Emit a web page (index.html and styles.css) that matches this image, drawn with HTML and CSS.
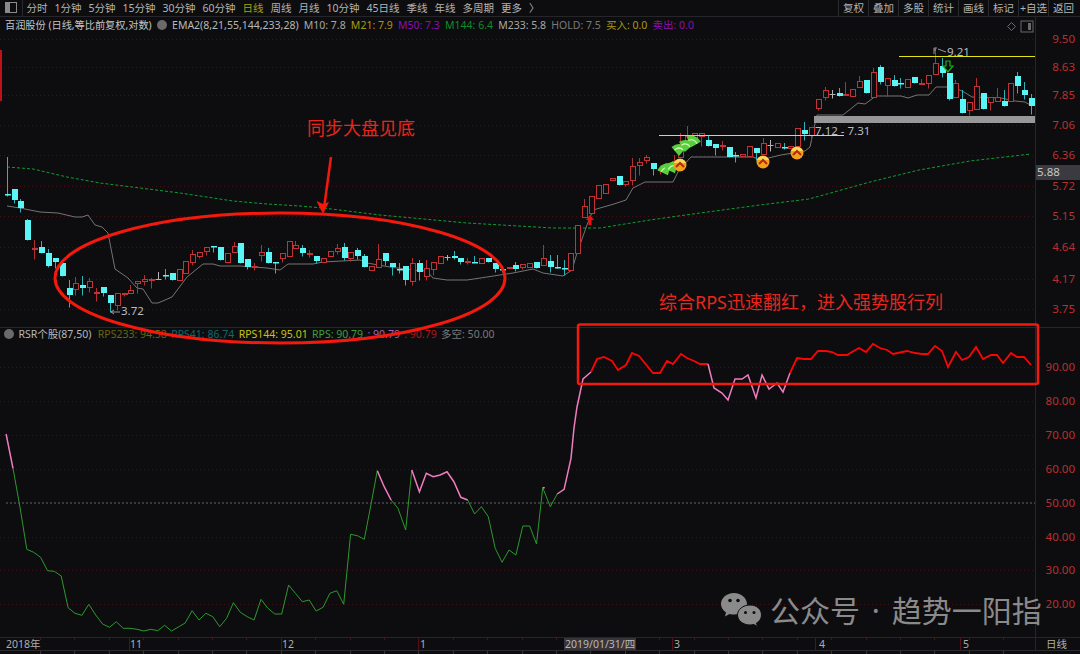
FILE: index.html
```html
<!DOCTYPE html>
<html lang="zh">
<head>
<meta charset="utf-8">
<title>百润股份 日线</title>
<link rel="stylesheet" href="styles.css">
</head>
<body>
<div class="page">
  <header class="toolbar">
    <div class="panel-btn"><span class="panel-glyph"></span></div>
    <nav class="periods">
      <span>分时</span><span>1分钟</span><span>5分钟</span><span>15分钟</span><span>30分钟</span><span>60分钟</span>
      <span class="active">日线</span><span>周线</span><span>月线</span><span>10分钟</span><span>45日线</span><span>季线</span><span>年线</span><span>多周期</span><span>更多</span><span>〉</span>
    </nav>
    <nav class="tools">
      <span>复权</span><span>叠加</span><span>多股</span><span>统计</span><span>画线</span><span>标记</span><span>+自选</span><span>返回</span>
    </nav>
  </header>

  <main class="stage">
    <svg class="layer" viewBox="0 17 1080 637" width="1080" height="637">
      <g id="grid"></g>
      <rect class="edge-mark" x="0" y="50" width="2" height="51"/>
      <polyline class="ema-green" points="7,167 33,169 67,177 100,183 140,188 180,193 233,201 267,204 300,206 323,208 380,215 467,223 553,228 600,228 650,220 700,213 760,205 809,199 870,182 919,170 970,161 1031,154"/>
      <polyline class="hold" points="7,206 20,208 40,212 58,213 75,217 82,217 88,215 95,225 102,227 108,233 115,269 128,278 137,288 143,289 152,303 158,303 172,297 187,277 203,264 213,264 220,266 240,266 267,268 280,270 288,264 313,264 323,262 360,260 367,263 390,267 413,270 427,271 433,278 447,280 467,280 487,277 513,273 533,269 543,273 563,276 572,270 577,253 587,225 593,210 600,208 614,204 626,200 633,188 645,182 673,182 679,170 691,157 753,157 760,160 781,155 805,151 810,147 814,128 817,115 843,115 858,103 865,104 876,96 901,96 908,98 917,95 929,95 936,87 953,87 964,92 972,97 1001,98 1015,101 1025,102 1032,106"/>
      <g id="candles"></g>

      <rect class="band" x="814" y="116" width="221" height="7"/>
      <line class="yellow" x1="659" y1="135.500" x2="844" y2="135.500"/>
      <line class="yellow" x1="899" y1="56.500" x2="1035" y2="56.500"/>
      <text class="note" x="815" y="135">7.12 - 7.31</text>
      <text class="note" x="947" y="56">9.21</text>
      <text class="note" x="121" y="315">3.72</text>
      <path class="pointer" d="M120 312H111M111 312l3 -2M111 312l3 2"/>
      <path class="pointer" d="M946 52L938 49M934 54V48h3M934 50h2"/>

      <g id="fans"></g>
      <g id="balls"></g>
      <path class="arrow-down" d="M946 61h4v5h3l-5 6-5-6h3z"/>
      <path class="arrow-up" d="M590 215l4 5h-2.500v5h-3v-5H586z"/>

      <g id="rsr"></g>
      <line class="dash50" x1="6" y1="503" x2="1035" y2="503"/>

      <line class="axis" x1="1035.500" y1="17" x2="1035.500" y2="650"/>
      <line class="axis" x1="0" y1="327.500" x2="1080" y2="327.500"/>
      <line class="axis" x1="0" y1="637.500" x2="1080" y2="637.500"/>
      <line class="foot" x1="0" y1="650.500" x2="1080" y2="650.500"/>
      <g id="ticks"></g>

      <g class="price">
        <text x="1075" y="43">9.50</text><text x="1075" y="71">8.63</text><text x="1075" y="99">7.85</text>
        <text x="1075" y="129">7.06</text><text x="1075" y="159">6.36</text><text x="1075" y="190">5.72</text>
        <text x="1075" y="220">5.15</text><text x="1075" y="251">4.64</text><text x="1075" y="283">4.17</text>
        <text x="1075" y="313">3.75</text>
        <text x="1075" y="371">90.00</text><text x="1075" y="405">80.00</text><text x="1075" y="439">70.00</text>
        <text x="1075" y="473">60.00</text><text x="1075" y="507">50.00</text><text x="1075" y="541">40.00</text>
        <text x="1075" y="574">30.00</text><text x="1075" y="608">20.00</text>
      </g>
      <rect class="now-box" x="1036" y="165" width="44" height="15"/>
      <text class="now" x="1037" y="176">5.88</text>
      <path class="diamond" d="M1011.500 22.500l4 4-4 4-4-4z"/>
      <rect class="square" x="1021" y="21" width="12" height="11"/>
      <rect class="square-fill" x="1028" y="23" width="3" height="7"/>

      <g class="dates">
        <text x="6" y="648">2018年</text><text x="130" y="648">11</text><text x="282" y="648">12</text>
        <text x="420" y="648">1</text><text x="674" y="648">3</text><text x="819" y="648">4</text><text x="963" y="648">5</text>
        <text x="1046" y="648">日线</text>
      </g>
      <rect class="date-box" x="564" y="638" width="72" height="12"/>
      <text class="date-now" x="565" y="648">2019/01/31/四</text>

      <g class="wechat">
        <path class="wechat-big" d="M734 593c-7.500 0-13 5-13 11 0 3.500 2 6.500 5 8.500l-1 4 4.500-2.500c1.500.4 3 .6 4.500.6 7.500 0 13-5 13-10.600S741.500 593 734 593z"/>
        <path class="wechat-small" d="M750 605c-7 0-12.500 4.500-12.500 10s5.500 10 12.500 10c1.300 0 2.600-.2 3.800-.5l3.700 2-1-3.400c3-1.800 5-4.700 5-8.100 0-5.500-4.500-10-11.500-10z"/>
        <circle class="eye" cx="730" cy="600.500" r="1.800"/><circle class="eye" cx="738" cy="600.500" r="1.800"/>
        <circle class="eye" cx="745.500" cy="612.500" r="1.500"/><circle class="eye" cx="754" cy="612.500" r="1.500"/>
      </g>
      <text class="mark" x="770" y="622">公众号 · 趋势一阳指</text>
    </svg>

    <div class="legend legend-top">
      <span class="name">百润股份 (日线,等比前复权,对数)</span>
      <span class="chev"></span>
      <span class="formula">EMA2(8,21,55,144,233,28)</span>
      <span class="l-gray">M10: 7.8</span>
      <span class="l-olive">M21: 7.9</span>
      <span class="l-purple">M50: 7.3</span>
      <span class="l-green">M144: 6.4</span>
      <span class="l-gray">M233: 5.8</span>
      <span class="l-dim">HOLD: 7.5</span>
      <span class="l-olive">买入: 0.0</span>
      <span class="l-purple">卖出: 0.0</span>
    </div>
    <div class="legend legend-low">
      <span class="chev"></span>
      <span class="formula">RSR个股(87,50)</span>
      <span class="l-dark-olive">RPS233: 94.58</span>
      <span class="l-teal">RPS41: 86.74</span>
      <span class="l-yellow">RPS144: 95.01</span>
      <span class="l-rps">RPS: 90.79</span>
      <span class="l-pink">: 90.79</span>
      <span class="l-red">: 90.79</span>
      <span class="l-dim">多空: 50.00</span>
    </div>

    <svg class="layer" viewBox="0 17 1080 637" width="1080" height="637">
      <ellipse class="ink" cx="280" cy="278" rx="225" ry="65"/>
      <path class="ink ink-arrow" d="M331 157L324 208"/>
      <path class="ink-head" d="M323 214l-6.500-13 6.500 3 6 -2z"/>
      <rect class="ink box" x="578" y="324.500" width="460" height="59.500" rx="2"/>
      <text class="say" x="307" y="135">同步大盘见底</text>
      <text class="say" x="659" y="309">综合RPS迅速翻红，进入强势股行列</text>
    </svg>
  </main>
</div>
<script src="chart.js"></script>
</body>
</html>
```
FILE: styles.css
```css
* { box-sizing: border-box; }
html, body { margin: 0; height: 100%; background: #0d0d10; }
body { font-family: "Noto Sans", "Noto Sans CJK SC", sans-serif; overflow: hidden; }
.page { width: 1080px; height: 654px; display: flex; flex-direction: column; }

.toolbar { height: 17px; flex: none; display: flex; align-items: stretch; border-bottom: 1px solid #26262a; font-size: 10.500px; line-height: 16px; color: #b4b4b4; }
.panel-btn { width: 23px; padding: 2px 0 0 5px; border-right: 1px solid #2a2a2e; }
.panel-glyph { display: block; width: 12px; height: 11px; border: 1px solid #8a8a8a; border-left-width: 5px; }
.periods { display: flex; gap: 7px; padding-left: 3.500px; white-space: nowrap; }
.periods .active { color: #a8a010; }
.tools { margin-left: auto; display: flex; white-space: nowrap; padding-right: 2px; }
.tools span { width: 30px; text-align: center; border-left: 1px solid #2a2a2e; }

.stage { position: relative; flex: 1; }
.layer { position: absolute; left: 0; top: 0; display: block; overflow: hidden; }

.legend { position: absolute; display: flex; align-items: center; gap: 5.200px; font-size: 10.500px; line-height: 14px; white-space: nowrap; color: #b8b8b8; }
.legend-top { left: 5px; top: 1px; }
.legend-low { left: 4px; top: 310px; gap: 4.400px; }
.chev { width: 10px; height: 10px; border-radius: 50%; background: #6a6a6a; }
.name { color: #c4c4c4; font-size: 10.200px; }
.l-gray { color: #a8a8a8; }
.l-olive { color: #a89a0c; }
.l-purple { color: #8c10ae; }
.l-green { color: #0e8c2c; }
.l-dim { color: #7a7a7a; }
.l-dark-olive { color: #66660e; margin-left: 2px; }
.l-teal { color: #0e6a6a; }
.l-yellow { color: #c8c414; }
.l-rps { color: #3e9e3e; }
.l-pink { color: #b060b0; }
.l-red { color: #b81414; }

.grid-line { stroke: #401114; stroke-width: 1; stroke-dasharray: 1 3; fill: none; }
.edge-mark { fill: #c01018; }
.ema-green { fill: none; stroke: #109c30; stroke-width: 1; stroke-dasharray: 3 2; }
.hold { fill: none; stroke: #747474; stroke-width: 1; }
.wick-c { stroke: #2eb4b8; stroke-width: 1; }
.body-c { fill: #5af6f6; }
.wick-r { stroke: #b23034; stroke-width: 1; }
.body-r { fill: #0d0d10; stroke: #c43236; stroke-width: 1; }
.wick-w { stroke: #b4b4b4; stroke-width: 1; }

.band { fill: #979797; }
.yellow { stroke: #e4e410; stroke-width: 1; }
.note { fill: #b8bcc4; font-size: 11.500px; }
.pointer { fill: none; stroke: #9a9a9a; stroke-width: 1; }
.fan-base { fill: #58cf3c; }
.fan-arc { fill: none; stroke: #d4f8b4; stroke-width: 1.200; }
.ball { fill: #f4a01c; }
.ball-top { fill: #fcd85a; }
.ball-chev { fill: none; stroke: #b22a10; stroke-width: 2; }
.arrow-down { fill: #0d0d10; stroke: #18b018; stroke-width: 1.200; }
.arrow-up { fill: #f01010; }

.rsr-green { fill: none; stroke: #2d992d; stroke-width: 1; }
.rsr-pink { fill: none; stroke: #f07cc0; stroke-width: 1.500; }
.rsr-red { fill: none; stroke: #fa0505; stroke-width: 1.800; }
.dash50 { stroke: #666; stroke-width: 1; stroke-dasharray: 2 2; }

.axis { stroke: #571015; stroke-width: 1; }
.foot { stroke: #2c2c30; stroke-width: 1; }
.tick-major { stroke: #571015; stroke-width: 1; }
.tick-minor { stroke: #42161a; stroke-width: 1; }
.tick-foot { stroke: #36363a; stroke-width: 1; }
.price text { fill: #b8302f; font-size: 11.500px; text-anchor: end; }
.now-box { fill: #3a3a40; }
.now { fill: #c8c8c8; font-size: 11.500px; }
.diamond { fill: none; stroke: #6a6a6a; }
.square { fill: none; stroke: #6a6a6a; }
.square-fill { fill: #6a6a6a; }
.dates text { fill: #aeaeae; font-size: 10.500px; }
.date-box { fill: #38343a; }
.date-now { fill: #b8b8b8; font-size: 10.500px; }

.wechat-big, .wechat-small { fill: #8a8a8a; }
.wechat-small { stroke: #0d0d10; stroke-width: 1; }
.eye { fill: #0d0d10; }
.mark { fill: #8a8a8a; font-size: 30px; word-spacing: 4px; }

.ink { fill: none; stroke: #f3190d; stroke-width: 3; }
.ink-arrow { stroke-width: 2.500; }
.ink-head { fill: #f3190d; }
.box { stroke-width: 2.500; }
.say { fill: #e8261c; font-size: 18px; }
```
FILE: chart.js
```js
var NS = 'http://www.w3.org/2000/svg';
function add(parent, tag, cls, attrs) {
  var el = document.createElementNS(NS, tag);
  if (cls) el.setAttribute('class', cls);
  for (var k in attrs) el.setAttribute(k, attrs[k]);
  parent.appendChild(el);
  return el;
}

// grid
var gridG = document.getElementById('grid');
[39, 67, 95, 125, 155, 186, 216, 247, 279, 309, 367, 401, 435, 469, 537, 570, 604].forEach(function (y) {
  add(gridG, 'line', 'grid-line', { x1: 0, x2: 1035, y1: y + 0.5, y2: y + 0.5 });
});

// candles: kind, body top, body bottom, high, low (page pixels)
var K = [
['c',194,194,157,196],['c',189,200,189,203],['c',201,208,199,212],['c',220,240,219,240],['r',248,248,240,259],
['c',247,253,241,253],['c',253,266,249,267],['c',258,262,258,268],['c',263,276,263,276],['c',288,295,280,307],
['r',283,289,277,295],['c',285,288,276,295],['r',281,287,278,292],['r',292,293,288,301],['c',287,293,287,296],
['c',295,303,295,312],['r',293,305,293,310],['r',293,294,293,296],['r',290,293,285,293],['r',281,283,281,293],
['r',279,281,275,285],['r',279,279,278,288],['w',279,279,272,279],['c',275,275,269,279],['c',273,280,273,280],
['r',269,280,269,280],['r',261,273,261,273],['r',254,262,250,265],['r',252,256,252,258],['r',247,251,247,255],
['c',246,246,246,252],['c',247,260,247,260],['r',253,262,253,262],['r',246,252,242,252],['c',243,263,243,263],
['c',259,267,259,269],['r',266,266,263,270],['r',252,255,245,261],['c',252,263,248,263],['c',262,263,262,273],
['r',253,258,253,262],['r',241,256,241,256],['r',245,248,241,248],
['c',248,253,245,256],['r',253,253,250,257],['c',256,261,256,263],['r',258,262,258,262],['r',251,256,251,256],
['r',248,251,244,254],['c',247,258,243,260],['r',252,258,252,261],['c',250,256,248,259],['c',256,267,254,267],
['r',266,270,266,270],['r',259,267,244,267],['c',253,261,253,265],['c',263,267,263,275],['c',269,269,263,273],
['c',266,280,266,285],['r',263,281,258,285],['c',263,272,260,280],['r',268,276,260,280],['r',262,269,262,275],
['r',256,263,256,263],['w',257,257,255,260],['c',256,258,251,259],['c',258,262,258,264],['r',261,261,258,264],
['c',262,262,256,262],['r',258,263,258,263],['c',258,262,258,262],['c',263,269,263,272],['c',269,269,269,272],
['r',267,268,267,268],['c',265,269,262,271],['r',264,267,264,269],['r',263,267,263,267],['c',262,268,262,268],
['r',258,265,245,265],['c',261,267,255,272],['c',267,267,255,268],['c',268,268,260,275],['r',253,270,253,270],
['r',225,253,225,253],['r',206,217,199,217],['r',196,213,196,213],
['r',185,198,185,198],['r',184,193,184,193],['r',178,180,178,180],['c',176,185,176,185],['r',181,184,181,186],
['r',166,180,158,185],['r',162,165,158,175],['r',157,160,155,163],['c',163,169,163,175],['r',169,169,169,174],
['r',163,170,163,170],['r',161,161,155,165],['r',144,157,133,157],['r',136,140,126,140],['r',133,143,133,143],
['r',133,136,133,146],['c',140,146,135,146],['c',144,148,144,155],['r',145,145,141,150],['c',147,157,147,157],
['c',155,155,152,162],['r',154,156,154,156],['r',146,156,146,156],['c',148,153,148,160],['r',143,154,138,154],
['w',145,145,140,151],['r',143,147,143,147],['c',147,147,143,149],['r',146,148,146,148],['r',128,146,128,146],
['c',130,134,122,140],['r',127,135,127,142],['r',99,108,99,110],['r',90,97,87,100],['w',94,94,90,98],
['c',93,96,88,96],['r',94,94,82,94],['r',89,96,89,96],['r',81,87,76,87],['c',80,93,80,93],
['r',72,97,68,97],['c',67,82,65,84],['r',78,85,78,96],['c',80,86,75,86],['c',83,83,78,88],
['r',79,87,79,87],['c',77,83,77,83],['r',83,83,79,84],['r',75,83,75,88],['r',63,74,48,74],
['c',66,73,58,77],['c',73,99,73,100],['r',83,97,80,97],['c',99,113,90,113],['r',102,110,102,115],
['r',86,109,78,109],['c',93,109,93,109],['r',97,102,97,110],['r',97,101,88,101],['c',101,106,90,106],
['r',83,101,83,101],['c',76,86,72,93],['c',90,95,82,99],['c',98,106,94,114]
];
var cg = document.getElementById('candles');
K.forEach(function (k, i) {
  var x = Math.round(6.7 + 6.875 * i) + 0.5;
  var hi = Math.min(k[3], k[1]), lo = Math.max(k[4], k[2]);
  add(cg, 'line', 'wick-' + k[0], { x1: x, x2: x, y1: hi, y2: lo + 0.5 });
  if (k[0] === 'w') {
    add(cg, 'line', 'wick-w', { x1: x - 3, x2: x + 3, y1: k[1] + 0.5, y2: k[1] + 0.5 });
  } else if (k[0] === 'c') {
    add(cg, 'rect', 'body-c', { x: x - 2.5, y: k[1], width: 6, height: Math.max(k[2] - k[1], 1.5) });
  } else {
    add(cg, 'rect', 'body-r', { x: x - 2, y: k[1] + 0.5, width: 5, height: Math.max(k[2] - k[1], 1) });
  }
});

// green signal fans
var fans = document.getElementById('fans');
[[665, 169, -25], [672, 167, -25], [679, 149, 0], [686, 145, 10], [693, 141, 20]].forEach(function (p) {
  var g = add(fans, 'g', '', { transform: 'translate(' + p[0] + ' ' + p[1] + ') rotate(' + p[2] + ')' });
  add(g, 'path', 'fan-base', { d: 'M0 7L-7.500 -2Q0 -8 7.500 -2Z' });
  add(g, 'path', 'fan-arc', { d: 'M-4.500 1Q0 -3 4.500 1' });
});

// yellow balls
var balls = document.getElementById('balls');
[[680, 165], [763, 162], [797, 153]].forEach(function (p) {
  var g = add(balls, 'g', '', { transform: 'translate(' + p[0] + ' ' + p[1] + ')' });
  add(g, 'circle', 'ball', { r: 6.5 });
  add(g, 'path', 'ball-top', { d: 'M-6 -2A6.500 6.500 0 0 1 6 -2Z' });
  add(g, 'path', 'ball-chev', { d: 'M-4 2L0 -2L4 2' });
});

// RSR line
var z = [[16,42],[34,145],[52,260],[70,388],[88,397],[106,412],[124,452],[142,454],[160,468],[178,563],[196,580],[214,586],[232,553],[250,585],[268,612],[286,622],[304,605],[322,625],[340,625],[358,628],[376,633],[394,628],[412,632],[430,616],[448,633],[466,621],[484,609],[502,572],[520,600],[538,580],[556,590],[574,620],[592,595],[610,548],[628,577],[646,590],[664,600],[682,538],[700,565],[718,582],[736,582],[754,495],[772,520],[790,545],[808,540],[826,573],[844,562],[862,520],[880,512],[898,553],[916,343],[934,347],[952,358],[970,250],[986,152],[1004,200],[1022,240],[1040,265],[1060,330],[1076,150],[1096,215],[1114,160],[1132,170],[1150,165],[1168,155],[1186,185],[1204,232],[1222,240],[1240,282],[1258,260],[1276,290],[1294,385],[1312,427],[1330,390],[1348,405],[1366,318],[1384,318],[1402,372],[1418,203],[1438,260],[1456,222],[1474,208],[1492,115]];
var P = z.map(function (p) { return [+(p[0] / 2.613).toFixed(1), +(420 + p[1] / 3).toFixed(1)]; });
var pinkTail = P.slice(80).concat([[574,428],[577,407],[583,379],[591,372]]);
var redA = [[591,372],[597,359],[604,357],[612,361],[618,370],[626,365],[632,353],[639,356],[653,373],[660,373],[667,361],[673,364],[681,354],[687,358],[694,361],[700,364],[708,364]];
var pinkMid = [[708,364],[714,388],[722,393],[728,400],[735,379],[742,379],[748,375],[756,398],[762,375],[769,389],[777,383],[783,392],[790,373]];
var redB = [[790,373],[797,358],[804,359],[811,359],[818,351],[826,351],[832,352],[838,355],[847,355],[852,352],[859,348],[866,352],[873,344],[880,348],[887,350],[893,354],[907,351],[915,353],[922,354],[928,354],[935,346],[942,351],[948,367],[956,352],[962,360],[969,357],[976,347],[983,359],[991,355],[997,355],[1003,363],[1011,353],[1017,357],[1024,357],[1031,365]];
var rg = document.getElementById('rsr');
function line(pts, cls) { add(rg, 'polyline', cls, { points: pts.map(function (p) { return p.join(','); }).join(' ') }); }
line(P.slice(1, 55), 'rsr-green');
line(P.slice(56, 60), 'rsr-green');
line(P.slice(67, 81), 'rsr-green');
line(P.slice(0, 2), 'rsr-pink');
line(P.slice(54, 57), 'rsr-pink');
line(P.slice(59, 68), 'rsr-pink');
line([P[78], [P[78][0] + 2, P[78][1]]], 'rsr-pink');
line(pinkTail, 'rsr-pink');
line(redA, 'rsr-red');
line(pinkMid, 'rsr-pink');
line(redB, 'rsr-red');

// time axis ticks
var tg = document.getElementById('ticks');
[129, 281, 418, 672, 815, 960].forEach(function (x) {
  add(tg, 'line', 'tick-major', { x1: x + 0.5, x2: x + 0.5, y1: 638, y2: 650 });
});
for (var x = 40; x < 1035; x += 34.4) {
  var rx = Math.round(x) + 0.5;
  add(tg, 'line', 'tick-minor', { x1: rx, x2: rx, y1: 638, y2: 640 });
  add(tg, 'line', 'tick-foot', { x1: rx, x2: rx, y1: 651, y2: 654 });
}
```
